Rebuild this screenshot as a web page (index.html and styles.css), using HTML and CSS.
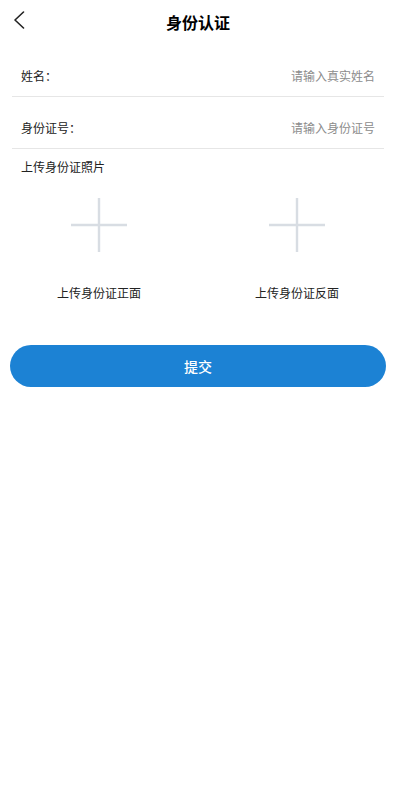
FILE: index.html
```html
<!DOCTYPE html>
<html lang="zh-CN">
<head>
<meta charset="utf-8">
<meta name="viewport" content="width=device-width, initial-scale=1">
<title>身份认证</title>
<link rel="stylesheet" href="styles.css">
</head>
<body>
<div class="page">
  <header class="nav">
    <span class="back">
      <svg width="12" height="18" viewBox="0 0 12 18"><path d="M10.5 1 L2 9 L10.5 17" fill="none" stroke="#222" stroke-width="1.6" stroke-linecap="round" stroke-linejoin="round"/></svg>
    </span>
    <h1 class="title">身份认证</h1>
  </header>
  <div class="form">
    <div class="row">
      <span class="label">姓名：</span>
      <span class="placeholder">请输入真实姓名</span>
    </div>
    <div class="row">
      <span class="label">身份证号：</span>
      <span class="placeholder">请输入身份证号</span>
    </div>
  </div>
  <div class="section-title">上传身份证照片</div>
  <div class="uploads">
    <div class="upload">
      <svg class="plus" width="56" height="54" viewBox="0 0 56 54"><path d="M0 27 H56 M28 0 V54" stroke="#d8dde3" stroke-width="2.4" fill="none"/></svg>
      <span class="upload-label">上传身份证正面</span>
    </div>
    <div class="upload">
      <svg class="plus" width="56" height="54" viewBox="0 0 56 54"><path d="M0 27 H56 M28 0 V54" stroke="#d8dde3" stroke-width="2.4" fill="none"/></svg>
      <span class="upload-label">上传身份证反面</span>
    </div>
  </div>
  <div class="actions">
    <button class="submit">提交</button>
  </div>
</div>
</body>
</html>
```
FILE: styles.css
```css
* { box-sizing: border-box; }
html, body { margin: 0; padding: 0; background: #fff; }
body {
  font-family: "Noto Sans CJK SC", "Noto Sans", sans-serif;
  color: #333;
  width: 396px;
  height: 794px;
}
.nav {
  position: relative;
  height: 45px;
  display: flex;
  align-items: center;
  justify-content: center;
}
.back {
  position: absolute;
  left: 13px;
  top: 11px;
  width: 12px;
  height: 18px;
  display: block;
}
.back svg { display: block; }
.title {
  margin: 0;
  font-size: 16px;
  font-weight: 700;
  color: #000;
  line-height: 20px;
  padding-bottom: 1px;
}
.form { padding: 0 12px; }
.row {
  height: 52px;
  padding: 9px 9px 0 9px;
  display: flex;
  align-items: center;
  justify-content: space-between;
  border-bottom: 1px solid #e6e6e6;
  font-size: 12px;
}
.label { color: #222; }
.placeholder { color: #8c8c8c; }
.section-title {
  margin-top: 9px;
  padding-left: 21px;
  font-size: 12px;
  line-height: 17px;
  color: #222;
}
.uploads {
  display: grid;
  grid-template-columns: 1fr 1fr;
  margin-top: 23px;
}
.upload {
  display: flex;
  flex-direction: column;
  align-items: center;
}
.plus { display: block; }
.upload-label {
  margin-top: 32px;
  font-size: 12px;
  line-height: 17px;
  color: #222;
}
.actions {
  padding: 0 10px;
  margin-top: 44px;
}
.submit {
  display: block;
  width: 100%;
  height: 42px;
  border: none;
  border-radius: 21px;
  background: #1c82d4;
  color: #fff;
  font-family: inherit;
  font-size: 14px;
  font-weight: 500;
}
```
